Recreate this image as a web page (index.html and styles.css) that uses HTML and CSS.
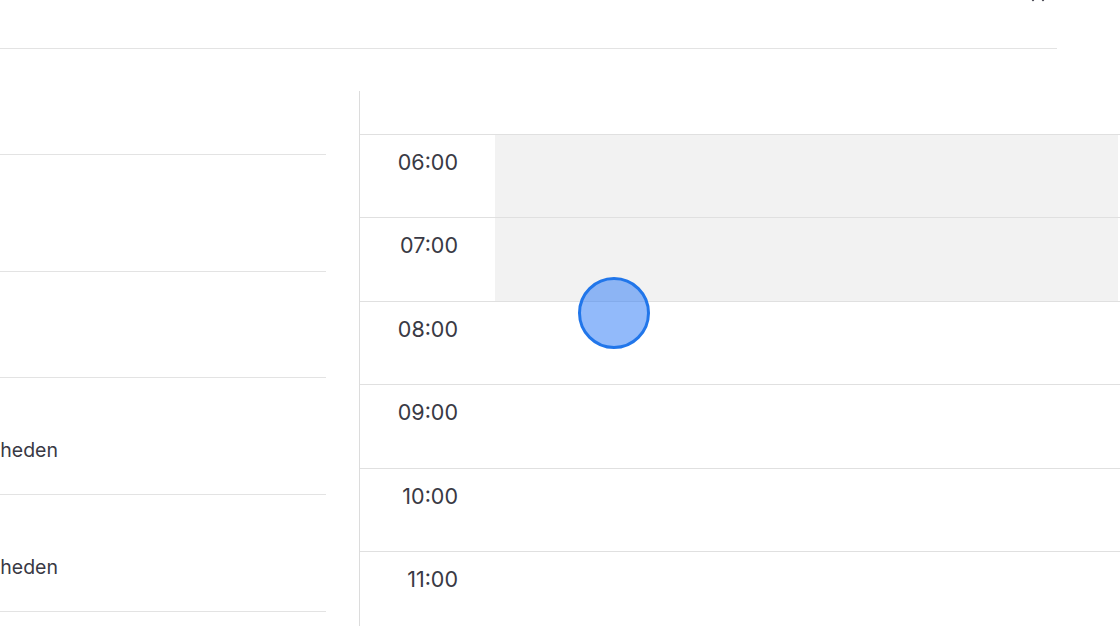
FILE: index.html
```html
<!DOCTYPE html>
<html lang="nl">
<head>
  <meta charset="UTF-8">
  <meta name="viewport" content="width=device-width, initial-scale=1.0">
  <title>Beschikbaarheid</title>
  <link rel="stylesheet" href="styles.css">
</head>
<body>
  <div class="topbar">
    <svg class="top-icon" viewBox="0 0 24 24">
      <path d="M4 6h16M7 6v15M17 6v15"/>
    </svg>
  </div>

  <div class="main">
    <div class="day-list">
      <div class="day-row"></div>
      <div class="day-row short"></div>
      <div class="day-row">
        <div class="day-note">Geen beschikbaarheden</div>
      </div>
      <div class="day-row">
        <div class="day-note">Geen beschikbaarheden</div>
      </div>
      <div class="day-row"></div>
    </div>

    <div class="calendar">
      <div class="cal-header"></div>
      <div class="hour">
        <div class="hour-label">06:00</div>
        <div class="hour-slot blocked"></div>
      </div>
      <div class="hour">
        <div class="hour-label">07:00</div>
        <div class="hour-slot blocked"></div>
      </div>
      <div class="hour">
        <div class="hour-label">08:00</div>
        <div class="hour-slot"></div>
      </div>
      <div class="hour">
        <div class="hour-label">09:00</div>
        <div class="hour-slot"></div>
      </div>
      <div class="hour">
        <div class="hour-label">10:00</div>
        <div class="hour-slot"></div>
      </div>
      <div class="hour">
        <div class="hour-label">11:00</div>
        <div class="hour-slot"></div>
      </div>

      <!-- touch indicator -->
      <div class="touch"></div>
    </div>
  </div>
</body>
</html>
```

FILE: styles.css
```css
body {
  font-family: 'Inter', 'Noto Sans', sans-serif;
  margin: 0;
  padding: 0;
  background: #fff;
  color: #393944;
  overflow: hidden;
  height: 626px;
}
.topbar {
  width: 1057px;
  height: 48px;
  border-bottom: 1px solid #e3e3e3;
  display: flex;
  justify-content: flex-end;
  align-items: flex-start;
}
.top-icon {
  width: 24px;
  height: 24px;
  margin-top: -21px;
  margin-right: 7px;
  fill: none;
  stroke: #55555f;
  stroke-width: 2.4;
  stroke-linecap: round;
}
.main {
  display: flex;
  align-items: flex-start;
}
.day-list {
  width: 326px;
  margin-right: 33px;
  padding-top: 105px;
}
.day-row {
  box-sizing: border-box;
  height: 117px;
  border-top: 1px solid #e3e3e3;
  padding-top: 59px;
}
.day-row.short {
  height: 106px;
}
.day-note {
  width: 298px;
  margin-left: -240px;
  text-align: right;
  font-size: 19.5px;
  line-height: 26px;
  white-space: nowrap;
}
.calendar {
  flex: 1;
  margin-top: 42px;
  border-left: 1px solid #dcdcdc;
  position: relative;
  height: 535px;
}
.cal-header {
  height: 43px;
  border-bottom: 1px solid #e0e0e0;
}
.hour {
  display: flex;
  box-sizing: border-box;
  height: 83.4px;
  border-bottom: 1px solid #e0e0e0;
}
.hour-label {
  width: 135px;
  box-sizing: border-box;
  padding: 14px 37px 0 0;
  text-align: right;
  font-size: 21.5px;
  line-height: 26px;
}
.hour-slot {
  flex: 1;
  margin-right: 2px;
}
.hour-slot.blocked {
  background: #f2f2f2;
}
.touch {
  position: absolute;
  left: 218px;
  top: 186px;
  width: 66px;
  height: 66px;
  border: 3px solid #2176ea;
  border-radius: 50%;
  background: rgba(37, 117, 245, 0.5);
}
```
